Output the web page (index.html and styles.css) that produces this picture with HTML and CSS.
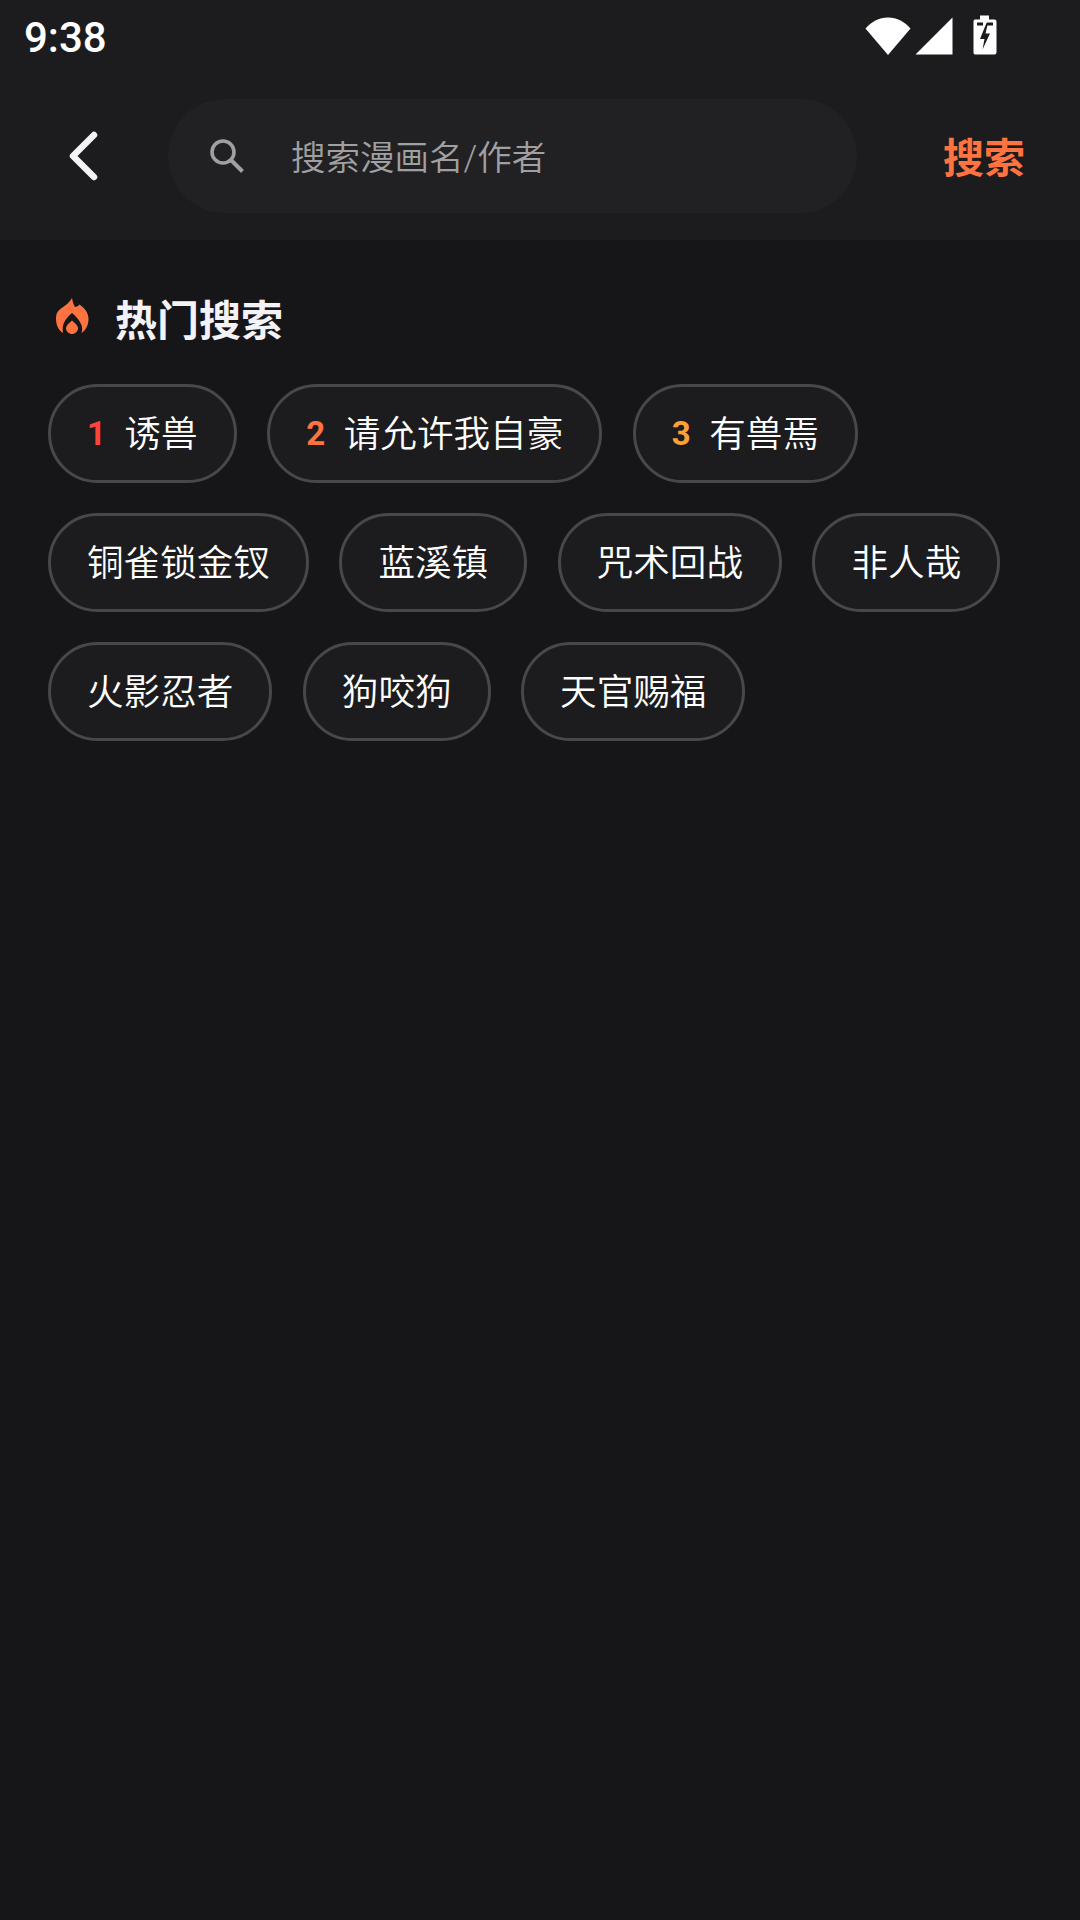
FILE: index.html
```html
<!DOCTYPE html>
<html>
<head>
  <meta charset="utf-8">
  <link rel="stylesheet" href="styles.css">
  <title>搜索</title>
</head>
<body>
  <div class="top">
    <div class="status">
      <span class="time">9:38</span>
      <div class="status-icons">
        <svg class="wifi" width="46" height="38" viewBox="0 0 46 38">
          <path d="M0.500 11.500 C6 5 14 0.500 23 0.500 C32 0.500 40 5 45.500 11.500 L23 38 Z" fill="#fff"/>
        </svg>
        <svg class="signal" width="38" height="38" viewBox="0 0 38 38">
          <path d="M37.500 0.500 V37.500 H0.500 Z" fill="#fff"/>
        </svg>
        <svg class="battery" width="24" height="40" viewBox="0 0 24 40">
          <path d="M7 0.500 H16 V4.500 H21.500 Q23.500 4.500 23.500 6.500 V37.500 Q23.500 39.500 21.500 39.500 H2 Q0.500 39.500 0.500 37.500 V6.500 Q0.500 4.500 2 4.500 H7 Z" fill="#fff"/>
          <path d="M13.500 8 L7 24 H11.500 L9.500 34.500 L17 18.500 H12.500 L15 8 Z" fill="#1c1c1e"/>
          <path d="M4 9 H10 M14 9 H20" stroke="#1c1c1e" stroke-width="3" fill="none"/>
        </svg>
      </div>
    </div>
    <div class="search-row">
      <svg class="back" width="34" height="52" viewBox="0 0 34 52">
        <path d="M28 5 L7 26 L28 47" stroke="#f2f2f7" stroke-width="6.500" stroke-linecap="round" stroke-linejoin="round" fill="none"/>
      </svg>
      <div class="search-box">
        <svg class="search-icon" width="36" height="36" viewBox="0 0 36 36">
          <circle cx="14" cy="14" r="11" stroke="#a0a0a2" stroke-width="3.600" fill="none"/>
          <path d="M22 22 L33.500 33.500" stroke="#a0a0a2" stroke-width="4" fill="none"/>
        </svg>
        <span class="placeholder">搜索漫画名/作者</span>
      </div>
      <span class="search-btn">搜索</span>
    </div>
  </div>

  <div class="content">
    <div class="hot-title">
      <svg class="flame" width="33" height="36" viewBox="0 0 33 36">
        <path fill="#ff7340" d="M16 0 C16.500 3 17.500 6.500 19 9 C20.500 9 22.500 8 23.500 6.500 C29 10.500 32.500 15 32.500 21 C32.500 27.500 29.500 32.500 25.500 35 C26.500 32 26.500 29 25 26 C23 21.500 19.500 18 16 15 C12.500 18 9 21.500 7.500 26 C6.500 29 6.500 32 7 35 C3 32.500 0 27.500 0 21 C0 15 2 12.500 5.700 10 C10 7 14 4 16 0 Z"/>
        <path fill="#ff7340" d="M16 22.500 C19 25 22 27.500 22 30 C22 33.500 19 36 16 36 C13 36 10 33.500 10 30 C10 27.500 13 25 16 22.500 Z"/>
      </svg>
      <span class="hot-text">热门搜索</span>
    </div>
    <div class="chips">
      <div class="chip"><span class="rank rank1">1</span><span class="label">诱兽</span></div>
      <div class="chip"><span class="rank rank2">2</span><span class="label">请允许我自豪</span></div>
      <div class="chip"><span class="rank rank3">3</span><span class="label">有兽焉</span></div>
      <div class="chip"><span class="label">铜雀锁金钗</span></div>
      <div class="chip"><span class="label">蓝溪镇</span></div>
      <div class="chip"><span class="label">咒术回战</span></div>
      <div class="chip"><span class="label">非人哉</span></div>
      <div class="chip"><span class="label">火影忍者</span></div>
      <div class="chip"><span class="label">狗咬狗</span></div>
      <div class="chip"><span class="label">天官赐福</span></div>
    </div>
  </div>
</body>
</html>
```

FILE: styles.css
```css
* {
  box-sizing: border-box;
}

html, body {
  margin: 0;
  height: 1920px;
}

body {
  background-color: #161618;
  font-family: Roboto, "Noto Sans CJK SC", sans-serif;
  color: #f2f2f7;
  overflow: hidden;
}

.top {
  height: 240px;
  background-color: #1c1c1e;
}

.status {
  height: 72px;
  padding: 0 83px 0 24px;
  display: flex;
  align-items: center;
  justify-content: space-between;
}

.time {
  font-size: 42px;
  font-weight: 500;
  color: #fff;
  line-height: 72px;
  padding-top: 4px;
}

.status-icons {
  display: flex;
  align-items: flex-start;
}

.wifi {
  margin-right: 4px;
}

.signal {
  margin-right: 20px;
}

.battery {
  margin-top: -2px;
}

.search-row {
  height: 168px;
  display: flex;
  align-items: center;
  padding-left: 66px;
}

.back {
  flex: none;
  margin-right: 68px;
}

.search-box {
  width: 689px;
  height: 114px;
  border-radius: 57px;
  background-color: #212123;
  display: flex;
  align-items: center;
  padding-left: 41px;
}

.search-icon {
  flex: none;
  margin-right: 46px;
}

.placeholder {
  font-size: 34.5px;
  font-weight: 350;
  color: #a0a0a2;
  padding-bottom: 2px;
}

.search-btn {
  margin-left: 86px;
  font-size: 41px;
  font-weight: 700;
  color: #ff7340;
  padding-bottom: 2px;
}

.content {
  padding: 52px 48px 0;
}

.hot-title {
  display: flex;
  align-items: center;
  height: 50px;
}

.flame {
  margin-left: 8px;
  margin-right: 26px;
  margin-top: -2px;
}

.hot-text {
  font-size: 42px;
  font-weight: 700;
}

.chips {
  margin-top: 42px;
  display: flex;
  flex-wrap: wrap;
  gap: 30px 30.5px;
}

.chip {
  height: 99px;
  padding: 0 36px;
  border: 3px solid #48484a;
  border-radius: 50px;
  background-color: #1c1c1e;
  display: flex;
  align-items: center;
  font-size: 36.6px;
}

.label {
  font-weight: 350;
  color: #fff;
  padding-bottom: 5px;
}

.rank {
  font-size: 33px;
  font-weight: 700;
  margin-right: 18.6px;
}

.rank1 {
  color: #ff453a;
}

.rank2 {
  color: #ff7340;
}

.rank3 {
  color: #ffa033;
}
```
